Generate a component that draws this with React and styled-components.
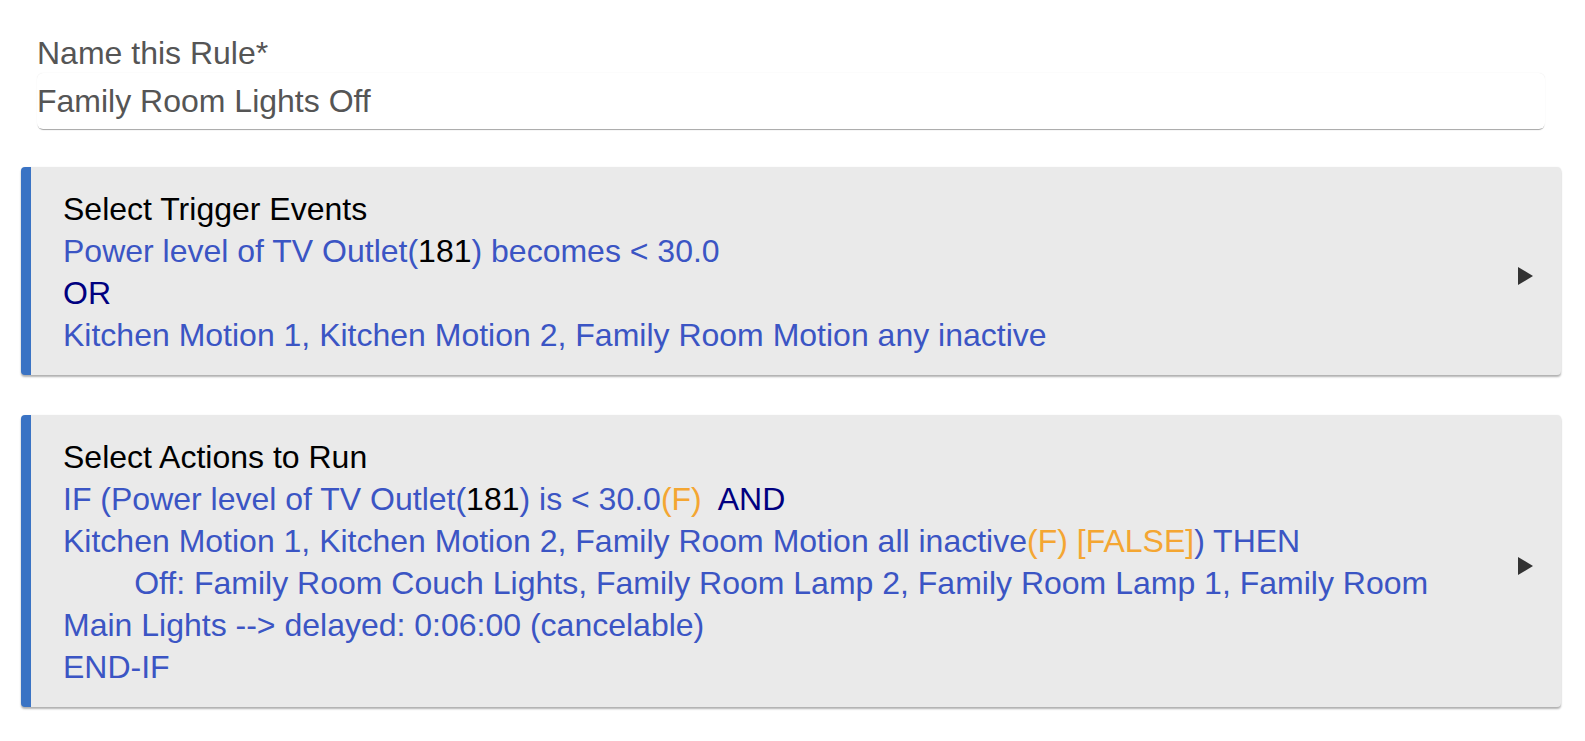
import React from "react";
import styled, { createGlobalStyle } from "styled-components";

const GlobalStyle = createGlobalStyle`
  body {
    margin: 0;
    background: #ffffff;
    font-family: "Liberation Sans", Arial, Helvetica, sans-serif;
  }
`;

const Page = styled.div`
  padding: 31px 24px 20px 21px;
  font-size: 32px;
  line-height: 42px;
`;

const Field = styled.div`
  margin: 0 16px 38px 16px;
`;

const Label = styled.div`
  color: #555555;
  padding: 3px 0 0 0;
  line-height: 39px;
`;

const Input = styled.div`
  background: #ffffff;
  color: #555555;
  border-radius: 6px;
  padding: 8px 0 6px 0;
  line-height: 41.7px;
  box-shadow: 0 2px 1px -1px rgba(0, 0, 0, 0.35), 0 0 1px rgba(0, 0, 0, 0.12);
`;

const Card = styled.div`
  display: flex;
  align-items: center;
  background: #eaeaea;
  border-left: 10px solid #3a73c4;
  border-radius: 4px;
  padding: 21px 28px 19px 32px;
  margin-bottom: 40px;
  box-shadow: 0 2px 2px rgba(0, 0, 0, 0.3), 0 0 2px rgba(0, 0, 0, 0.06);
`;

const Body = styled.div`
  flex: 1;
`;

const Line = styled.div`
  white-space: pre;
  color: ${(p) => p.color || "#3b55c4"};
`;

const Part = styled.span`
  color: ${(p) => p.color};
`;

const Arrow = styled.div`
  width: 0;
  height: 0;
  margin-top: 8px;
  border-top: 9px solid transparent;
  border-bottom: 9px solid transparent;
  border-left: 15px solid #333333;
`;

const BLACK = "#000000";
const NAVY = "#000080";
const ORANGE = "#f4a632";

const App = () => {
  return (
    <Page>
      <GlobalStyle />
      <Field>
        <Label>Name this Rule*</Label>
        <Input>Family Room Lights Off</Input>
      </Field>

      <Card>
        <Body>
          <Line color={BLACK}>Select Trigger Events</Line>
          <Line>
            Power level of TV Outlet(<Part color={BLACK}>181</Part>) becomes &lt; 30.0
          </Line>
          <Line color={NAVY}>OR</Line>
          <Line>Kitchen Motion 1, Kitchen Motion 2, Family Room Motion any inactive</Line>
        </Body>
        <Arrow />
      </Card>

      <Card>
        <Body>
          <Line color={BLACK}>Select Actions to Run</Line>
          <Line>
            IF (Power level of TV Outlet(<Part color={BLACK}>181</Part>) is &lt; 30.0
            <Part color={ORANGE}>(F)</Part>
            <Part color={NAVY}>{"  AND"}</Part>
          </Line>
          <Line>
            Kitchen Motion 1, Kitchen Motion 2, Family Room Motion all inactive
            <Part color={ORANGE}>(F) [FALSE]</Part>) THEN
          </Line>
          <Line>
            {"        "}Off: Family Room Couch Lights, Family Room Lamp 2, Family Room Lamp 1, Family Room
          </Line>
          <Line>Main Lights --&gt; delayed: 0:06:00 (cancelable)</Line>
          <Line>END-IF</Line>
        </Body>
        <Arrow />
      </Card>
    </Page>
  );
};

export default App;
